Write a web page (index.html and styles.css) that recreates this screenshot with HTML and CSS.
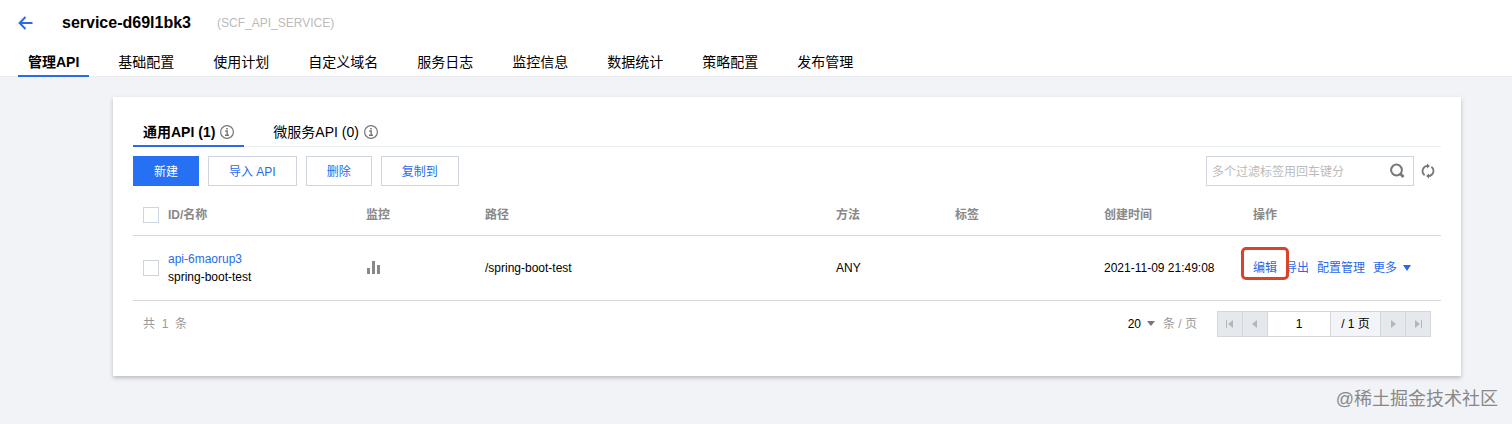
FILE: index.html
```html
<!DOCTYPE html>
<html lang="zh-CN">
<head>
    <meta charset="UTF-8">
    <meta name="viewport" content="width=device-width, initial-scale=1.0">
    <title>service-d69l1bk3 - 管理API</title>
    <link rel="stylesheet" href="styles.css">
</head>
<body>

    <header class="header">
        <div class="title-row">
            <a class="back" href="#" aria-label="返回">
                <svg width="16" height="16" viewBox="0 0 16 16" fill="none" stroke="#2a6ae9" stroke-width="2"><path d="M14.500 8H2M7.500 2L1.600 8L7.500 14"/></svg>
            </a>
            <h1>service-d69l1bk3</h1>
            <span class="service-name">(SCF_API_SERVICE)</span>
        </div>
        <nav class="tabs">
            <a class="tab active" href="#">管理API</a>
            <a class="tab" href="#">基础配置</a>
            <a class="tab" href="#">使用计划</a>
            <a class="tab" href="#">自定义域名</a>
            <a class="tab" href="#">服务日志</a>
            <a class="tab" href="#">监控信息</a>
            <a class="tab" href="#">数据统计</a>
            <a class="tab" href="#">策略配置</a>
            <a class="tab" href="#">发布管理</a>
        </nav>
    </header>

    <main class="content">
        <section class="card">
            <nav class="tabs sub-tabs">
                <a class="tab active" href="#">通用API (1)
                    <svg class="info" width="14" height="14" viewBox="0 0 14 14" fill="none" stroke="#777"><circle cx="7" cy="7" r="6.400" stroke-width="1.200"/><path d="M5.200 6H7.200V10M5 10.200H9M6.200 3.700H7.800" stroke-width="1.400"/></svg>
                </a>
                <a class="tab" href="#">微服务API (0)
                    <svg class="info" width="14" height="14" viewBox="0 0 14 14" fill="none" stroke="#777"><circle cx="7" cy="7" r="6.400" stroke-width="1.200"/><path d="M5.200 6H7.200V10M5 10.200H9M6.200 3.700H7.800" stroke-width="1.400"/></svg>
                </a>
            </nav>

            <div class="toolbar">
                <button class="btn primary" type="button">新建</button>
                <button class="btn" type="button">导入 API</button>
                <button class="btn" type="button">删除</button>
                <button class="btn" type="button">复制到</button>
                <form class="search">
                    <input type="text" placeholder="多个过滤标签用回车键分" aria-label="搜索">
                    <button class="icon-btn" type="submit" aria-label="搜索">
                        <svg width="16" height="16" viewBox="0 0 16 16" fill="none" stroke="#777" stroke-width="2"><circle cx="7.500" cy="7" r="5.400"/><path d="M11.300 10.800L14.500 14" stroke-width="2.800"/></svg>
                    </button>
                </form>
                <button class="icon-btn" type="button" aria-label="刷新">
                    <svg width="14" height="16" viewBox="0 0 14 16"><g fill="none" stroke="#777" stroke-width="1.800"><path d="M3.600 12.200A5.200 5.200 0 0 1 6.500 2.900"/><path d="M10.400 3.800A5.200 5.200 0 0 1 7.500 13.100"/></g><path d="M6 .5L9 3L6 5.500ZM8 10.500L5 13L8 15.500Z" fill="#777"/></svg>
                </button>
            </div>

            <table class="api-table">
                <colgroup>
                    <col class="col-check">
                    <col class="col-id">
                    <col class="col-small">
                    <col>
                    <col class="col-small">
                    <col class="col-medium">
                    <col class="col-medium">
                    <col class="col-actions">
                </colgroup>
                <thead>
                    <tr>
                        <th class="check"><input type="checkbox" aria-label="全选"></th>
                        <th>ID/名称</th>
                        <th>监控</th>
                        <th>路径</th>
                        <th>方法</th>
                        <th>标签</th>
                        <th>创建时间</th>
                        <th>操作</th>
                    </tr>
                </thead>
                <tbody>
                    <tr>
                        <td class="check"><input type="checkbox" aria-label="选择 api-6maorup3"></td>
                        <td><a href="#">api-6maorup3</a><br>spring-boot-test</td>
                        <td>
                            <a class="monitor" href="#" aria-label="监控">
                                <svg width="16" height="14" viewBox="0 0 16 14" fill="#888"><path d="M1 7H4V13H1ZM6 0H9V13H6ZM11 4H14V13H11Z"/></svg>
                            </a>
                        </td>
                        <td>/spring-boot-test</td>
                        <td>ANY</td>
                        <td></td>
                        <td>2021-11-09 21:49:08</td>
                        <td>
                            <div class="actions">
                                <a class="marked" href="#">编辑</a>
                                <a href="#">导出</a>
                                <a href="#">配置管理</a>
                                <a class="more" href="#">更多<span class="caret"></span></a>
                            </div>
                        </td>
                    </tr>
                </tbody>
            </table>

            <div class="table-footer">
                <span class="total">共&nbsp; 1 &nbsp;条</span>
                <button class="page-size" type="button">20<span class="caret"></span></button>
                <span class="unit">条 / 页</span>
                <div class="pager">
                    <button type="button" aria-label="首页"><svg width="8" height="8" viewBox="0 0 8 8"><path d="M0 0H1V8H0ZM7 0V8L2 4Z"/></svg></button>
                    <button type="button" aria-label="上一页"><svg width="8" height="8" viewBox="0 0 8 8"><path d="M6 0V8L1 4Z"/></svg></button>
                    <input type="text" value="1" aria-label="页码">
                    <span>/ 1 页</span>
                    <button type="button" aria-label="下一页"><svg width="8" height="8" viewBox="0 0 8 8"><path d="M2 0V8L7 4Z"/></svg></button>
                    <button type="button" aria-label="末页"><svg width="8" height="8" viewBox="0 0 8 8"><path d="M7 0H8V8H7ZM1 0V8L6 4Z"/></svg></button>
                </div>
            </div>
        </section>
    </main>

    <footer class="watermark">@稀土掘金技术社区</footer>

</body>
</html>
```

FILE: styles.css
```css
* {
    box-sizing: border-box;
}

body {
    margin: 0;
    background: #f2f3f7;
    color: #000;
    font-family: "Liberation Sans", "Noto Sans CJK SC", sans-serif;
    font-size: 12px;
    line-height: 18px;
}

a {
    color: #2a6ae9;
    text-decoration: none;
}

button,
input {
    font: inherit;
    margin: 0;
}

svg {
    display: block;
}

/* header */
.header {
    background: #fff;
    padding: 0 18px;
    border-bottom: 1px solid #ebecef;
}

.title-row {
    display: flex;
    align-items: center;
    height: 46px;
}

h1 {
    margin: 0 26px 0 28px;
    font-size: 16px;
    line-height: 24px;
}

.service-name {
    color: #bbb;
}

.tabs {
    display: flex;
    gap: 19px;
}

.tab {
    display: flex;
    align-items: center;
    gap: 5px;
    height: 31px;
    padding: 2px 10px 0;
    border-bottom: 2px solid transparent;
    color: #000;
    font-size: 14px;
    white-space: nowrap;
}

.header .tab {
    margin-bottom: -1px;
}

.tab.active {
    border-bottom-color: #2a6ae9;
    font-weight: bold;
}

/* card */
.content {
    padding: 20px 51px 0 113px;
}

.card {
    background: #fff;
    padding: 20px 20px 39px;
    box-shadow: 0 2px 4px rgba(54, 58, 80, 0.3);
}

.sub-tabs {
    box-shadow: inset 0 -1px #ebecef;
}

.sub-tabs .tab {
    height: 30px;
}

.toolbar {
    display: flex;
    align-items: center;
    gap: 9px;
    margin-top: 9px;
}

.btn {
    height: 30px;
    padding: 2px 20px 0;
    border: 1px solid #cfd5de;
    background: #fff;
    color: #2a6ae9;
    cursor: pointer;
}

.btn.primary {
    border-color: #2670f3;
    background: #2670f3;
    color: #fff;
}

.search {
    display: flex;
    align-items: center;
    width: 208px;
    height: 30px;
    margin-left: auto;
    padding: 0 8px 0 5px;
    border: 1px solid #cfd5de;
}

.search input {
    flex: 1;
    min-width: 0;
    padding: 2px 0 0;
    border: 0;
    outline: none;
}

.search input::placeholder {
    color: #bbb;
}

.icon-btn {
    padding: 0;
    border: 0;
    background: none;
    cursor: pointer;
}

.toolbar > .icon-btn {
    margin: 0 6px 0 -2px;
}

/* table */
.api-table {
    width: 100%;
    margin-top: 10px;
    border-collapse: collapse;
    table-layout: fixed;
}

.col-check {
    width: 25px;
}

.col-id,
.col-actions {
    width: 198px;
}

.col-small {
    width: 119px;
}

.col-medium {
    width: 149px;
}

.api-table th,
.api-table td {
    padding: 0 10px;
    border-bottom: 1px solid #d5d7db;
    text-align: left;
    white-space: nowrap;
}

.api-table th {
    height: 39px;
    color: #888;
}

.api-table td {
    height: 65px;
}

.api-table .check {
    padding-right: 0;
}

input[type="checkbox"] {
    display: block;
    width: 16px;
    height: 16px;
    appearance: none;
    border: 1px solid #cfd5de;
    background: #fff;
}

.monitor {
    display: block;
}

.actions {
    display: flex;
    gap: 8px;
}

/* highlight round the edit link */
.marked {
    position: relative;
}

.marked::after {
    content: "";
    position: absolute;
    inset: -12px -12px -3px;
    border: 3px solid #d9432a;
    border-radius: 5px;
}

.caret {
    border: 4px solid transparent;
    border-top: 6px solid;
    border-bottom: 0;
}

.more {
    display: flex;
    align-items: center;
    gap: 6px;
}

/* pagination */
.table-footer {
    display: flex;
    align-items: center;
    padding: 10px 10px 0;
    color: #999;
}

.page-size {
    display: flex;
    align-items: center;
    gap: 6px;
    margin: 0 8px 0 auto;
    padding: 0;
    border: 0;
    background: none;
    color: #000;
}

.page-size .caret {
    border-top-width: 5px;
    border-top-color: #777;
}

.unit {
    margin-right: 20px;
}

.pager {
    display: flex;
    height: 26px;
    border: 1px solid #d3d6db;
    color: #000;
}

.pager > * {
    display: flex;
    align-items: center;
    justify-content: center;
    padding: 0;
    border: 0;
    border-left: 1px solid #d3d6db;
    background: #e5e8ed;
}

.pager button {
    width: 25px;
}

.pager > :first-child {
    width: 24px;
    border-left: 0;
}

.pager button svg {
    fill: #b3b6bb;
}

.pager input {
    width: 63px;
    background: #fff;
    text-align: center;
}

.pager span {
    width: 50px;
    background: #f2f4f8;
}

.watermark {
    padding: 9px 14px 10px;
    color: #888;
    font-size: 18px;
    line-height: 28px;
    text-align: right;
}
```
